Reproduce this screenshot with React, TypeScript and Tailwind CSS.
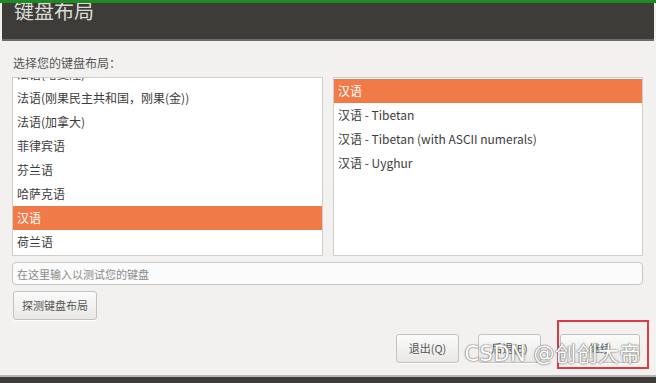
const FONT = { fontFamily: '"Noto Sans CJK SC", "Noto Sans", sans-serif' };

const layouts = [
  "法语(喀麦隆)",
  "法语(刚果民主共和国，刚果(金))",
  "法语(加拿大)",
  "菲律宾语",
  "芬兰语",
  "哈萨克语",
  "汉语",
  "荷兰语",
  "黑山语",
];

const variants = [
  "汉语",
  "汉语 - Tibetan",
  "汉语 - Tibetan (with ASCII numerals)",
  "汉语 - Uyghur",
];

function Row({ label, selected }: { label: string; selected: boolean }) {
  return (
    <div
      className={
        "h-[24px] flex items-center px-[4px] text-[12px] whitespace-nowrap " +
        (selected ? "bg-[#f07a48] text-white" : "text-[#3c3c3c]")
      }
    >
      {label}
    </div>
  );
}

function Btn({ label, w }: { label: string; w: string }) {
  return (
    <button
      className={
        "h-[29px] rounded-[3px] border border-[#c4c2bf] bg-gradient-to-b from-[#fbfbfb] to-[#e9e8e6] text-[11px] text-[#555] shadow-[0_1px_0_#fff] " +
        w
      }
    >
      {label}
    </button>
  );
}

export default function App() {
  return (
    <div className="w-[656px] h-[383px] bg-[#f2f1f0] flex flex-col overflow-hidden" style={FONT}>
      <div className="h-[3px] bg-[#1f8a22]" />
      <div className="h-[38px] bg-[#3d3c38] border-b-2 border-[#6b6a66] mx-[2px] overflow-hidden">
        <div className="-mt-[7px] ml-[12px] text-[20px] leading-[30px] text-[#dcdbd8]">键盘布局</div>
      </div>

      <div className="flex-1 flex flex-col px-[12px]">
        <div className="mt-[14px] h-[16px] flex items-center text-[12px] text-[#555] pl-[1px]">选择您的键盘布局：</div>

        <div className="mt-[6px] flex gap-[10px] h-[179px]">
          <div className="w-[311px] border border-[#cfcdca] bg-white overflow-hidden">
            <div className="-mt-[16px]">
              {layouts.map((l) => (
                <Row key={l} label={l} selected={l === "汉语"} />
              ))}
            </div>
          </div>
          <div className="w-[310px] border border-[#cfcdca] bg-white overflow-hidden pt-[1px]">
            {variants.map((v, i) => (
              <Row key={v} label={v} selected={i === 0} />
            ))}
          </div>
        </div>

        <div className="mt-[6px] h-[23px] w-[631px] rounded-[4px] border border-[#c8c6c3] bg-[#fbfbfb] flex items-center px-[4px] text-[11px] leading-[14px] text-[#8a8a8a]">
          在这里输入以测试您的键盘
        </div>

        <div className="mt-[6px]">
          <Btn label="探测键盘布局" w="w-[84px] ml-[1px] h-[28px]" />
        </div>

        <div className="mt-[14px] flex justify-end items-center gap-[19px] pr-[4px]">
          <Btn label="退出(Q)" w="w-[63px]" />
          <Btn label="后退(B)" w="w-[63px]" />
          <div className="relative">
            <Btn label="继续" w="w-[80px]" />
            <div className="absolute -left-[3px] -top-[14px] w-[92px] h-[49px] border-2 border-[#dc3b40]" />
          </div>
        </div>
      </div>

      <div className="relative">
        <div
          className="absolute right-[15px] -top-[31px] text-[21px] text-white leading-none tracking-[0.5px] [text-shadow:0_0_2px_#666,0_0_1px_#555] whitespace-nowrap"
          style={{ fontFamily: '"DejaVu Sans", "Noto Sans CJK SC", sans-serif' }}
        >
          CSDN @创创大帝
        </div>
      </div>
      <div className="h-[2px] bg-[#b8b7b4]" />
      <div className="h-[6px] bg-[#3d3c38]" />
    </div>
  );
}
